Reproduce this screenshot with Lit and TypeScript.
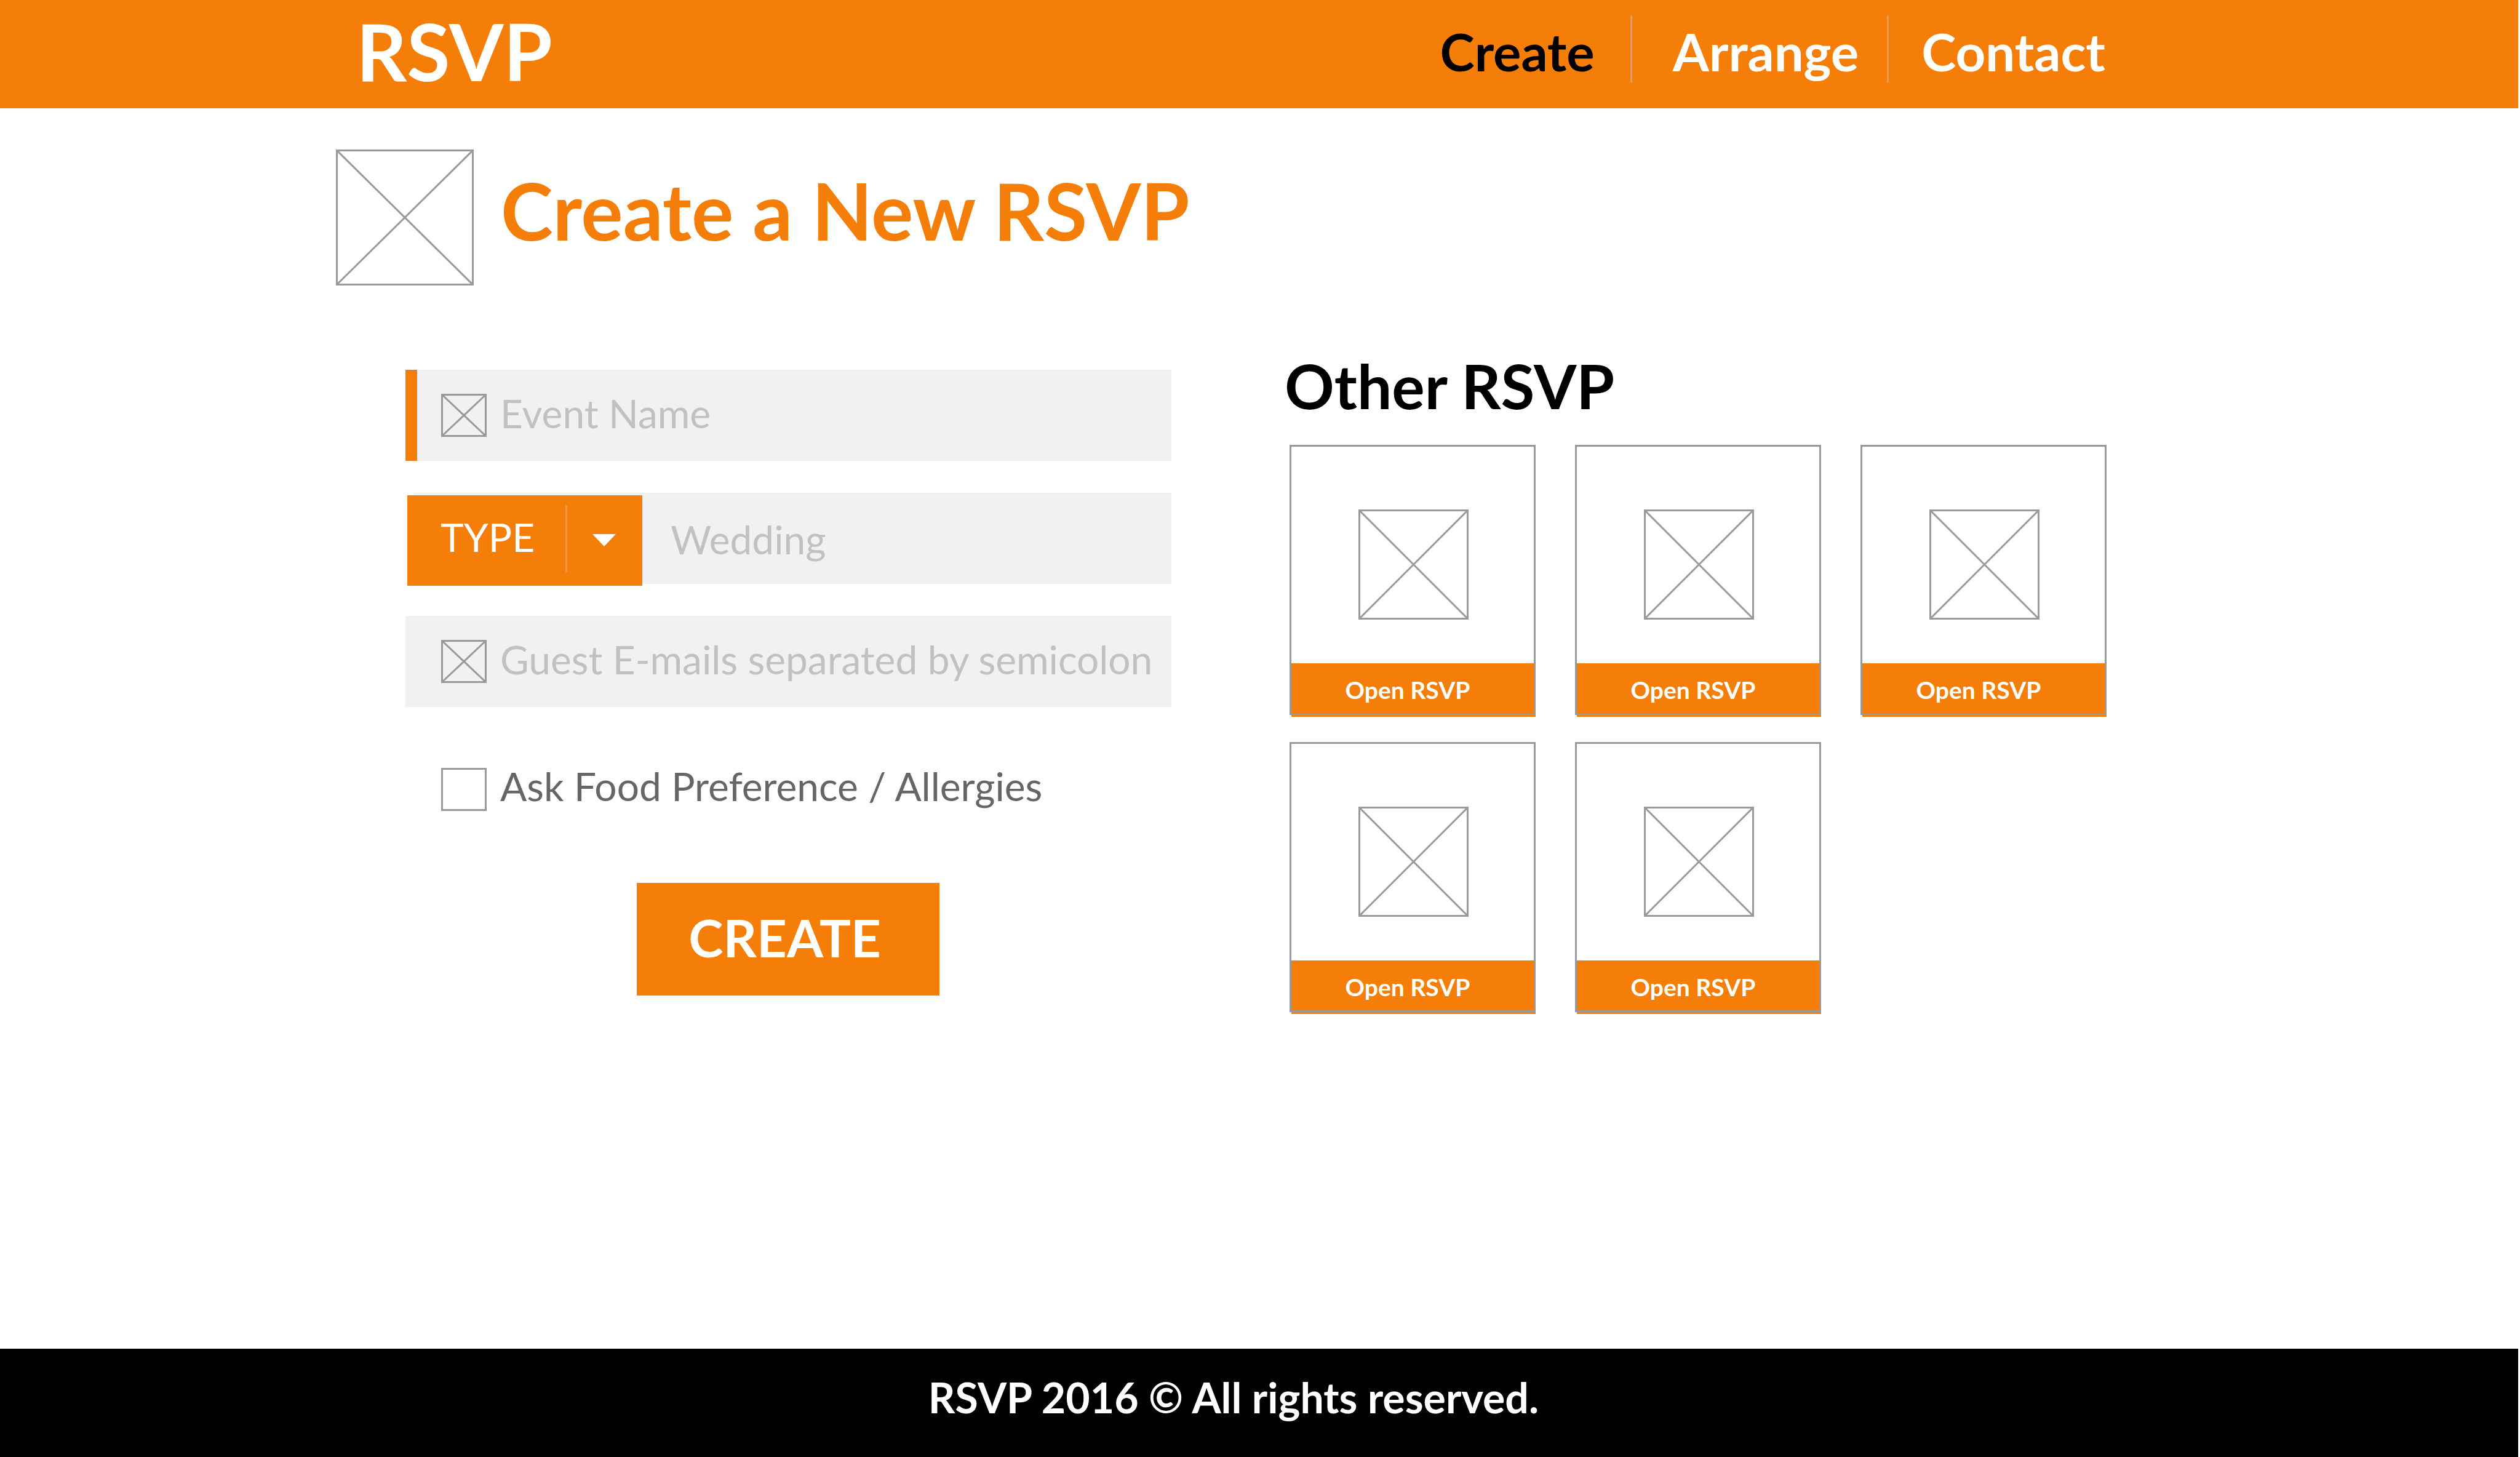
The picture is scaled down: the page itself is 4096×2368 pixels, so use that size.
import { LitElement, html, css, svg } from "lit";
import { customElement, property } from "lit/decorators.js";

/** Crossed box that stands in for an image or an icon. */
@customElement("image-placeholder")
export class ImagePlaceholder extends LitElement {
  @property({ type: Number }) width = 74;
  @property({ type: Number }) height = 70;

  static styles = css`
    :host {
      display: block;
      flex: none;
    }
    .box {
      display: block;
      fill: none;
      stroke: #999;
      stroke-width: 3;
    }
  `;

  render() {
    const w = this.width;
    const h = this.height;
    return html`<svg class="box" width=${w} height=${h} viewBox="0 0 ${w} ${h}" aria-hidden="true">
      ${svg`<rect x="1.5" y="1.5" width=${w - 3} height=${h - 3}></rect>
      <path d="M2 2L${w - 2} ${h - 2}M${w - 2} 2L2 ${h - 2}"></path>`}
    </svg>`;
  }
}

@customElement("rsvp-card")
export class RsvpCard extends LitElement {
  static styles = css`
    :host {
      display: grid;
    }
    .body {
      grid-area: 1 / 1;
      display: flex;
      flex-direction: column;
      padding-left: 3px;
    }
    .frame {
      grid-area: 1 / 1;
      margin-bottom: 3px;
      border: 3px solid #999;
      pointer-events: none;
    }
    .picture {
      display: flex;
      justify-content: center;
      padding: 105px 0 71px;
    }
    .open {
      height: 87px;
      border: 0;
      margin: 0;
      padding: 0 19px 2px 0;
      background: #f57e08;
      color: #fff;
      font: 700 39px/48px Lato, sans-serif;
      cursor: pointer;
    }
  `;

  render() {
    return html`
      <div class="body">
        <div class="picture"><image-placeholder .width=${179} .height=${179}></image-placeholder></div>
        <button class="open" type="button">Open RSVP</button>
      </div>
      <div class="frame"></div>
    `;
  }
}

@customElement("app-root")
export class AppRoot extends LitElement {
  private cards = [1, 2, 3, 4, 5];

  static styles = css`
    :host {
      display: flex;
      flex-direction: column;
      min-height: 100vh;
      background: #fff;
      color: #000;
      font-family: Lato, sans-serif;
    }
    * {
      box-sizing: border-box;
    }
    h1,
    h2 {
      margin: 0;
    }
    .header {
      display: flex;
      align-items: center;
      justify-content: space-between;
      height: 176px;
      margin-right: 3px;
      padding: 0 671px 10px 579px;
      background: #f57e08;
    }
    .logo {
      color: #fff;
      font-size: 128px;
      font-weight: 700;
      line-height: 128px;
      text-decoration: none;
    }
    .nav {
      display: flex;
      align-items: center;
    }
    .link {
      color: #fff;
      font-size: 85px;
      font-weight: 700;
      line-height: 96px;
      text-decoration: none;
    }
    .link.current {
      padding-right: 12px;
      color: #000;
    }
    .rule {
      width: 3px;
      height: 109px;
      background: #e79b5c;
    }
    .nav .rule {
      margin: 0 53px 8px 46px;
    }
    .nav .current + .rule {
      margin-right: 66px;
    }
    .main {
      flex: 1;
      padding: 67px 672px 64px 546px;
    }
    .title {
      display: flex;
      align-items: center;
      gap: 44px;
    }
    .title-text {
      padding-bottom: 24px;
      color: #f57e08;
      font-size: 128px;
      line-height: 128px;
    }
    .columns {
      display: grid;
      grid-template-columns: minmax(0, 1358fr) minmax(0, 1336fr);
      gap: 184px;
      align-items: start;
      padding-top: 114px;
    }
    .form {
      display: flex;
      flex-direction: column;
      padding: 23px 0 0 113px;
    }
    .field {
      display: flex;
      align-items: center;
      gap: 22px;
      height: 148px;
      margin-bottom: 52px;
      padding-left: 58px;
      background: #f1f1f1;
    }
    .field.active {
      padding-left: 39px;
      border-left: 19px solid #f57e08;
    }
    .field.type {
      gap: 0;
      padding: 0;
      background: linear-gradient(#f1f1f1, #f1f1f1) 13px 0 no-repeat;
    }
    .input {
      flex: 1;
      min-width: 0;
      height: 100%;
      padding: 0 0 8px;
      border: 0;
      outline: 0;
      background: none;
      color: #666;
      font: 400 64px/80px Lato, sans-serif;
    }
    .input::placeholder {
      color: #c1c1c1;
      opacity: 1;
    }
    .type .input {
      padding: 2px 0 0 46px;
    }
    .picker {
      display: grid;
      grid-template-columns: 257px 3px 1fr;
      align-items: center;
      width: 382px;
      height: 147px;
      margin: 6px 0 0 3px;
      background: #f57e08;
    }
    .select {
      grid-area: 1 / 1 / 2 / 4;
      height: 147px;
      padding: 0 0 11px 54px;
      border: 0;
      appearance: none;
      background: none;
      color: #fff;
      font: 400 64px/80px Lato, sans-serif;
    }
    .picker .rule {
      grid-area: 1 / 2;
      margin-bottom: 6px;
    }
    .caret {
      grid-area: 1 / 3;
      margin-left: 41px;
      fill: #fff;
      pointer-events: none;
    }
    .check {
      display: flex;
      align-items: center;
      gap: 22px;
      height: 80px;
      margin-top: 42px;
      padding-left: 58px;
      color: #666;
      font-size: 64px;
      line-height: 80px;
    }
    .check-text {
      padding-bottom: 10px;
    }
    .checkbox {
      flex: none;
      width: 74px;
      height: 70px;
      margin: 0;
      border: 3px solid #999;
      appearance: none;
      background: #fff;
    }
    .checkbox:checked {
      background: #f57e08;
    }
    .submit {
      align-self: center;
      width: 492px;
      height: 183px;
      margin: 112px 2px 0 0;
      padding: 0 10px 7px 0;
      border: 0;
      background: #f57e08;
      color: #fff;
      font: 700 85px/96px Lato, sans-serif;
      cursor: pointer;
    }
    .others-title {
      font-size: 100px;
      line-height: 96px;
    }
    .cards {
      display: grid;
      grid-template-columns: repeat(3, minmax(0, 1fr));
      gap: 41px 64px;
      padding: 49px 0 0 8px;
    }
    .footer {
      display: flex;
      align-items: center;
      justify-content: center;
      height: 176px;
      margin-right: 3px;
      padding: 0 83px 18px 0;
      background: #000;
      color: #fff;
      font-size: 68px;
      font-weight: 700;
      line-height: 80px;
    }
  `;

  render() {
    return html`
      <header class="header">
        <a class="logo" href="#home">RSVP</a>
        <nav class="nav">
          <a class="link current" href="#create" aria-current="page">Create</a>
          <span class="rule"></span>
          <a class="link" href="#arrange">Arrange</a>
          <span class="rule"></span>
          <a class="link" href="#contact">Contact</a>
        </nav>
      </header>
      <main class="main">
        <div class="title">
          <image-placeholder .width=${224} .height=${221}></image-placeholder>
          <h1 class="title-text">Create a New RSVP</h1>
        </div>
        <div class="columns">
          <form class="form">
            <label class="field active">
              <image-placeholder></image-placeholder>
              <input class="input" type="text" placeholder="Event Name" aria-label="Event Name" />
            </label>
            <div class="field type">
              <div class="picker">
                <select class="select" aria-label="Event type">
                  <option>TYPE</option>
                </select>
                <span class="rule"></span>
                <svg class="caret" width="38" height="20" viewBox="0 0 38 20" aria-hidden="true">
                  <path d="M0 0H38L19 20Z"></path>
                </svg>
              </div>
              <input class="input" type="text" placeholder="Wedding" aria-label="Wedding" />
            </div>
            <label class="field">
              <image-placeholder></image-placeholder>
              <input
                class="input"
                type="text"
                placeholder="Guest E-mails separated by semicolon"
                aria-label="Guest E-mails separated by semicolon"
              />
            </label>
            <label class="check">
              <input class="checkbox" type="checkbox" />
              <span class="check-text">Ask Food Preference / Allergies</span>
            </label>
            <button class="submit" type="button">CREATE</button>
          </form>
          <section>
            <h2 class="others-title">Other RSVP</h2>
            <div class="cards">${this.cards.map(() => html`<rsvp-card></rsvp-card>`)}</div>
          </section>
        </div>
      </main>
      <footer class="footer">RSVP 2016 © All rights reserved.</footer>
    `;
  }
}
